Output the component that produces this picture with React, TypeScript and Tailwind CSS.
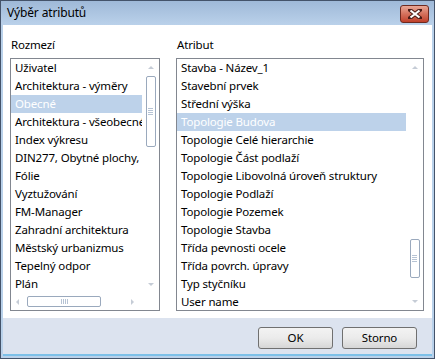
import React from 'react';

const LEFT_ITEMS = [
  'Uživatel',
  'Architektura - výměry',
  'Obecné',
  'Architektura - všeobecné',
  'Index výkresu',
  'DIN277, Obytné plochy, bytové jednotky',
  'Fólie',
  'Vyztužování',
  'FM-Manager',
  'Zahradní architektura',
  'Městský urbanizmus',
  'Tepelný odpor',
  'Plán',
];

const RIGHT_ITEMS = [
  'Stavba - Název_1',
  'Stavební prvek',
  'Střední výška',
  'Topologie Budova',
  'Topologie Celé hierarchie',
  'Topologie Část podlaží',
  'Topologie Libovolná úroveň struktury',
  'Topologie Podlaží',
  'Topologie Pozemek',
  'Topologie Stavba',
  'Třída pevnosti ocele',
  'Třída povrch. úpravy',
  'Typ styčníku',
  'User name',
];

const Arrow = ({ dir }: { dir: 'up' | 'down' | 'left' | 'right' }) => {
  const pts = {
    up: '1,5 4,2 7,5',
    down: '1,2 4,5 7,2',
    left: '5,1 2,4 5,7',
    right: '2,1 5,4 2,7',
  }[dir];
  return (
    <svg width="8" height="8" viewBox="0 0 8 8">
      <polygon points={pts} fill="#c5ccd6" />
    </svg>
  );
};

const Grip = ({ vertical }: { vertical: boolean }) => (
  <div className={vertical ? 'flex flex-col gap-[1px]' : 'flex gap-[1px]'}>
    {[0, 1, 2, 3].map(i => (
      <div key={i} className={vertical ? 'w-[5px] h-[1px] bg-[#b6c3d4]' : 'w-[1px] h-[5px] bg-[#b6c3d4]'} />
    ))}
  </div>
);

const VScroll = ({ thumbTop, thumbH, height }: { thumbTop: number; thumbH: number; height: number }) => (
  <div className="w-[17px] flex flex-col items-center shrink-0" style={{ height }}>
    <div className="h-[17px] flex items-center justify-center"><Arrow dir="up" /></div>
    <div className="flex-1 w-full flex flex-col items-center">
      <div
        className="w-[10px] rounded-[2px] border border-[#9aa9bd] bg-white flex items-center justify-center"
        style={{ marginTop: thumbTop, height: thumbH }}
      >
        <Grip vertical />
      </div>
    </div>
    <div className="h-[17px] flex items-center justify-center"><Arrow dir="down" /></div>
  </div>
);

const Row = ({ text, selected }: { text: string; selected?: boolean }) => (
  <div
    className={
      'h-[18px] leading-[18px] pl-[4px] whitespace-nowrap overflow-hidden ' +
      (selected ? 'bg-[#bdd2ea] text-white' : 'text-black')
    }
  >
    {text}
  </div>
);

export default function App() {
  return (
    <div className="w-[435px] h-[359px] bg-white font-['Noto_Sans',sans-serif] text-[11.5px] tracking-[-0.15px]">
      <div className="w-[435px] h-[359px] border border-[#44536a] bg-[#b9d1ea] flex flex-col">
        <div className="h-[24px] flex items-center justify-between pl-[6px] pr-[4px] bg-gradient-to-b from-[#9fb9d8] to-[#bad1ea]">
          <span className="text-[12px] text-black leading-none">Výběr atributů</span>
          <div className="w-[29px] h-[18px] rounded-[3px] border border-[#6e2a20] bg-gradient-to-b from-[#e9a796] via-[#d4705c] to-[#c0402b] flex items-center justify-center mt-[1px] mr-[1px]">
            <svg width="14" height="10" viewBox="0 0 14 10">
              <path d="M2 1 L12 9 M12 1 L2 9" stroke="#4a1c16" strokeWidth="4" strokeLinecap="square" />
              <path d="M2.5 1.5 L11.5 8.5 M11.5 1.5 L2.5 8.5" stroke="#ffffff" strokeWidth="2.2" />
            </svg>
          </div>
        </div>

        <div className="flex-1 mx-[2px] mb-[2px] flex flex-col">
          <div className="h-[293px] bg-white flex pl-[7px] pt-[12px]">
            <div className="w-[150px] flex flex-col">
              <div className="h-[21px] leading-[16px] pl-[1px]">Rozmezí</div>
              <div className="h-[253px] border border-[#828790] flex flex-col overflow-hidden">
                <div className="flex h-[234px]">
                  <div className="flex-1 overflow-hidden">
                    {LEFT_ITEMS.map((t, i) => (
                      <Row key={t} text={t} selected={i === 2} />
                    ))}
                  </div>
                  <VScroll height={234} thumbTop={0} thumbH={71} />
                </div>
                <div className="flex h-[17px]">
                  <div className="flex-1 flex items-center">
                    <div className="w-[14px] flex justify-center"><Arrow dir="left" /></div>
                    <div className="flex-1 flex items-center">
                      <div className="w-[74px] h-[11px] rounded-[2px] border border-[#9aa9bd] bg-white flex items-center justify-center ml-[2px]">
                        <Grip vertical={false} />
                      </div>
                    </div>
                    <div className="w-[14px] flex justify-center mr-[2px]"><Arrow dir="right" /></div>
                  </div>
                  <div className="w-[17px]" />
                </div>
              </div>
            </div>

            <div className="w-[248px] ml-[16px] flex flex-col">
              <div className="h-[21px] leading-[16px] pl-[1px]">Atribut</div>
              <div className="h-[253px] border border-[#828790] flex overflow-hidden">
                <div className="flex-1 overflow-hidden">
                  {RIGHT_ITEMS.map((t, i) => (
                    <Row key={t} text={t} selected={i === 3} />
                  ))}
                </div>
                <VScroll height={251} thumbTop={163} thumbH={39} />
              </div>
            </div>
          </div>

          <div className="flex-1 bg-[#dce3ef] flex justify-end items-start pt-[9px] pr-[15px] gap-[9px] border-b-[2px] border-[#7cc0e8]">
            {['OK', 'Storno'].map(l => (
              <div
                key={l}
                className="w-[75px] h-[22px] rounded-[3px] border border-[#707070] bg-gradient-to-b from-[#f3f3f3] via-[#ebebeb] to-[#d6d6d6] flex items-center justify-center text-black"
              >
                {l}
              </div>
            ))}
          </div>
        </div>
      </div>
    </div>
  );
}
